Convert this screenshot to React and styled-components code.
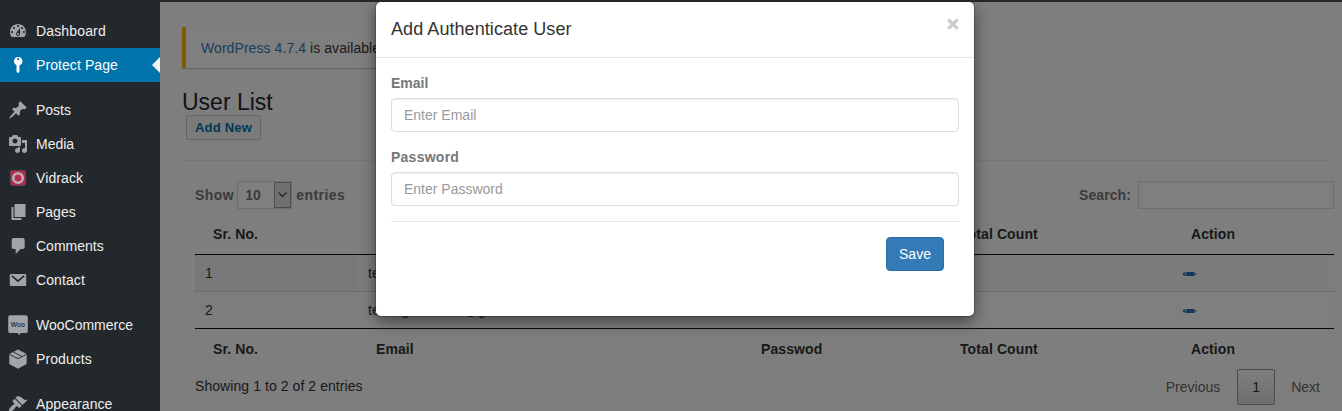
import React from "react";
import styled, { createGlobalStyle, css } from "styled-components";

const Global = createGlobalStyle`
  *, *::before, *::after { box-sizing: border-box; }
  html, body { margin: 0; height: 411px; overflow: hidden; background: #fff; }
  body { font: 14px/20px "Liberation Sans", Arial, sans-serif; color: #333; }
`;

const Page = styled.div`
  position: relative;
  height: 411px;
  overflow: hidden;
  display: flex;
  flex-direction: column;
`;
const AdminBar = styled.div`
  height: 2px;
  flex: none;
  background: #23282d;
  position: relative;
  z-index: 5;
`;
const Body = styled.div`
  display: flex;
  flex: 1;
  min-height: 0;
`;
const Sidebar = styled.nav`
  width: 160px;
  flex: none;
  background: #23282d;
  padding-top: 12px;
  position: relative;
  z-index: 4;
  overflow: hidden;
`;
const MenuItem = styled.div`
  position: relative;
  display: flex;
  align-items: center;
  height: 34px;
  margin-top: ${(p) => (p.$gap ? 11 : 0)}px;
  color: #eee;
  letter-spacing: ${(p) => p.$track || 0}px;
  ${(p) =>
    p.$active &&
    css`
      background: #0073aa;
      color: #fff;
      &::after {
        content: "";
        position: absolute;
        right: 0;
        top: 9px;
        border: 8px solid transparent;
        border-left: 0;
        border-right-color: #f1f1f1;
      }
    `}
`;
const MenuIcon = styled.svg`
  width: 20px;
  height: 20px;
  margin: 0 8px;
  flex: none;
  fill: ${(p) => (p.$active ? "#fff" : "#a0a5aa")};
`;

const Main = styled.main`
  flex: 1;
  min-width: 0;
  padding: 25px 8px 0 22px;
  background: #fdfdfd;
`;
const Notice = styled.div`
  width: 400px;
  height: 41px;
  padding: 11px 15px;
  border-left: 4px solid #ffb900;
  background: #fff;
  box-shadow: 0 1px 1px rgba(0, 0, 0, 0.2);
  white-space: nowrap;
  letter-spacing: 0.07px;
  a { color: #337ab7; }
`;
const Title = styled.h1`
  margin: 21px 0 0;
  font-size: 23px;
  line-height: 26px;
  font-weight: 400;
  color: #23282d;
`;
const AddNew = styled.button`
  display: block;
  width: 75px;
  height: 25px;
  margin-left: 4px;
  padding: 0;
  border: 1px solid #ccc;
  border-radius: 2px;
  background: #f7f7f7;
  color: #0073aa;
  font: bold 13px/22px "Liberation Sans", Arial, sans-serif;
  letter-spacing: 0.2px;
`;
const Rule = styled.hr`
  width: 1147px;
  margin: 20px 0;
  border: 0;
  border-top: 1px solid #eee;
`;
const DataTable = styled.section`
  margin-left: 13px;
`;
const Toolbar = styled.div`
  display: flex;
  justify-content: space-between;
  height: 28px;
  color: #777;
  font-weight: 700;
`;
const Control = styled.label`
  display: flex;
  align-items: center;
  line-height: 26px;
  letter-spacing: ${(p) => p.$track || 0.1}px;
`;
const Select = styled.span`
  display: flex;
  justify-content: space-between;
  width: 55px;
  height: 28px;
  margin: 0 4px 0 3px;
  border: 1px solid #ddd;
  padding-left: 7px;
  background: #fff;
  letter-spacing: 0.1px;
`;
const SelectArrow = styled.span`
  width: 17px;
  display: grid;
  place-items: center;
  border: 1px solid #999;
  background: #e1e1e1;
`;
const SearchBox = styled.input`
  width: 196px;
  height: 28px;
  margin-left: 7px;
  border: 1px solid #ddd;
  background: #fff;
  box-shadow: inset 0 1px 2px rgba(0, 0, 0, 0.07);
`;
const Grid = styled.div`
  display: grid;
  grid-template-columns: 163px 385px 199px 231px 161px;
  height: ${(p) => p.$h}px;
  border-bottom: ${(p) => p.$line || "0"};
  background: ${(p) => p.$bg || "transparent"};
`;
const Head = styled.div`
  padding: ${(p) => p.$top}px 18px 0;
  color: #333;
  font-weight: 700;
  letter-spacing: 0.1px;
`;
const Cell = styled.div`
  padding: 8px 10px;
  background: ${(p) => p.$bg || "transparent"};
  svg { display: block; margin-top: 9px; }
`;
const Footer = styled.div`
  display: flex;
  justify-content: space-between;
`;
const Info = styled.div`
  padding-top: 7px;
  letter-spacing: 0.07px;
`;
const Pager = styled.div`
  display: flex;
  color: #666;
`;
const PageBtn = styled.span`
  height: 36px;
  padding: 8px ${(p) => p.$px || 15}px;
  line-height: 20px;
  ${(p) =>
    p.$current &&
    css`
      width: 38px;
      margin: 0 2px;
      padding: 7px 0;
      text-align: center;
      border: 1px solid #979797;
      border-radius: 2px;
      background: linear-gradient(#fff, #dcdcdc);
      color: #333;
    `}
`;

const Backdrop = styled.div`
  position: absolute;
  inset: 2px 0 0 160px;
  z-index: 6;
  background: rgba(0, 0, 0, 0.5);
`;
const Modal = styled.div`
  position: absolute;
  left: 376px;
  top: 2px;
  z-index: 7;
  width: 598px;
  height: 314px;
  border-radius: 5px;
  background: #fff;
  box-shadow: 0 0 0 1px rgba(0, 0, 0, 0.16), 0 5px 15px rgba(0, 0, 0, 0.5);
  clip-path: inset(0 -30px -30px -30px);
`;
const ModalHeader = styled.header`
  display: flex;
  justify-content: space-between;
  height: 56px;
  padding: 14px 15px;
  border-bottom: 1px solid #e5e5e5;
`;
const ModalTitle = styled.h4`
  margin: 0;
  font-size: 18px;
  line-height: 26px;
  font-weight: 400;
  letter-spacing: 0.07px;
`;
const Close = styled.span`
  margin-top: -3px;
  font-size: 21px;
  line-height: 21px;
  font-weight: 700;
  color: #ccc;
  -webkit-text-stroke: 0.7px #ccc;
`;
const Form = styled.form`
  padding: 15px 15px 0;
`;
const Field = styled.label`
  display: block;
  margin-bottom: 15px;
  color: #777;
  font-weight: 700;
  letter-spacing: ${(p) => p.$track || 0}px;
`;
const TextInput = styled.input`
  display: block;
  width: 100%;
  height: 34px;
  margin-top: 5px;
  padding: 6px 12px;
  border: 1px solid #ddd;
  border-radius: 4px;
  box-shadow: inset 0 1px 2px rgba(0, 0, 0, 0.07);
  font: 14px "Liberation Sans", Arial, sans-serif;
  &::placeholder { color: #999; opacity: 1; }
`;
const Actions = styled.div`
  display: flex;
  justify-content: flex-end;
  padding: 15px;
  border-top: 1px solid #e5e5e5;
`;
const Save = styled.button`
  width: 58px;
  height: 34px;
  padding: 0;
  border: 1px solid #2e6da4;
  border-radius: 4px;
  background: #337ab7;
  color: #fff;
  font: 14px "Liberation Sans", Arial, sans-serif;
`;
const WooText = styled.text`
  font: bold 8px "Liberation Sans", sans-serif;
  fill: #3a4046;
`;

const icons = {
  dashboard: (
    <path fillRule="evenodd" d="M3.76 16h12.48c1.1-1.37 1.76-3.11 1.76-5 0-4.42-3.58-8-8-8s-8 3.58-8 8c0 1.89.66 3.63 1.76 5zM10 4c.55 0 1 .45 1 1s-.45 1-1 1-1-.45-1-1 .45-1 1-1zM6 6c.55 0 1 .45 1 1s-.45 1-1 1-1-.45-1-1 .45-1 1-1zm8 0c.55 0 1 .45 1 1s-.45 1-1 1-1-.45-1-1 .45-1 1-1zm-5.37 5.55L12 7v6c0 1.1-.9 2-2 2s-2-.9-2-2c0-.57.24-1.08.63-1.45zM4 10c.55 0 1 .45 1 1s-.45 1-1 1-1-.45-1-1 .45-1 1-1zm12 0c.55 0 1 .45 1 1s-.45 1-1 1-1-.45-1-1 .45-1 1-1zm-5 3c0-.55-.45-1-1-1s-1 .45-1 1 .45 1 1 1 1-.45 1-1z" />
  ),
  key: (
    <path fillRule="evenodd" d="M10.200 2a4.200 4.200 0 0 0-1.700 8.050V16.500l1.200 1.400h.6l1.200-1.400v-6.300A4.200 4.200 0 0 0 10.200 2zm0 1.100a1.100 1.100 0 1 1 0 2.200 1.100 1.100 0 0 1 0-2.200z" />
  ),
  posts: (
    <path d="M10.44 3.02l1.82-1.82 6.36 6.35-1.83 1.82c-1.05-.68-2.48-.57-3.41.36l-.75.75c-.92.93-1.04 2.35-.35 3.41l-1.83 1.82-2.41-2.41-2.8 2.79c-.42.42-3.38 2.71-3.8 2.29s1.86-3.39 2.28-3.81l2.79-2.79L4.1 9.36l1.83-1.82c1.05.69 2.48.57 3.4-.36l.75-.75c.93-.92 1.05-2.35.36-3.41z" />
  ),
  media: (
    <path fillRule="evenodd" d="M13 11V4c0-.55-.45-1-1-1h-1.67L9 1H5L3.67 3H2c-.55 0-1 .45-1 1v7c0 .55.45 1 1 1h10c.55 0 1-.45 1-1zM7 4.5c1.38 0 2.5 1.12 2.5 2.5S8.38 9.5 7 9.5 4.500 8.380 4.500 7 5.620 4.500 7 4.500zM14 6h5v10.500c0 1.380-1.120 2.500-2.500 2.500S14 17.880 14 16.500s1.120-2.500 2.500-2.500c.170 0 .340.020.500.050V9h-3V6zm-4 8.050V13h2v3.500c0 1.380-1.120 2.500-2.500 2.500S7 17.880 7 16.500 8.120 14 9.500 14c.170 0 .340.020.500.050z" />
  ),
  vidrack: (
    <>
      <rect x="2.800" y="2.800" width="14.400" height="14.400" rx="1" fill="#c01f45" stroke="#7c5a68" strokeWidth=".8" />
      <circle cx="10" cy="10" r="4.800" fill="#c42a4c" stroke="#b4b2b6" strokeWidth="2.600" />
      <circle cx="10" cy="10" r="1.700" fill="#a0305c" />
    </>
  ),
  pages: <path d="M6 15V2h11v13H6zm-1 1h8v2H3V5h2v11z" transform="translate(.5 0)" />,
  comments: <path d="M5 2h9c1.100 0 2 .9 2 2v7c0 1.100-.9 2-2 2h-2l-5 5v-5H5c-1.100 0-2-.9-2-2V4c0-1.100.9-2 2-2z" transform="translate(.7 0)" />,
  contact: (
    <path fillRule="evenodd" d="M3 4h14c.6 0 1.200.5 1.200 1.100v9.800c0 .6-.6 1.100-1.200 1.100H3c-.6 0-1.200-.5-1.200-1.100V5.100C1.800 4.500 2.400 4 3 4zm.7 1.700c-.4.500-.1 1 .3 1.300l6 5.300L16 7c.4-.3.800-.8.300-1.300-.4-.4-.9-.2-1.300.1l-5 4.200-5-4.200c-.4-.300-.9-.500-1.300-.1z" />
  ),
  woo: (
    <>
      <path d="M2.500.2h15c1.400 0 2.300.9 2.300 2.300v13.300c0 1.400-.9 2.300-2.300 2.300h-5L11.800 20l-2.600-1.900H2.500C1.100 18.100.2 17.200.2 15.800V2.500C.2 1.100 1.100.2 2.500.2z" />
      <WooText x="2.800" y="12.200" textLength="14.400" lengthAdjust="spacingAndGlyphs">Woo</WooText>
    </>
  ),
  products: (
    <>
      <path d="M10 .5l8.700 4.500v10L10 19.800 1.300 15V5z" />
      <path d="M1.300 5.300L10 9.700l8.700-4.400M5.400 3l8.500 4.500" fill="none" stroke="#23282d" strokeWidth=".9" />
    </>
  ),
  appearance: (
    <path d="M14.480 11.060L7.410 3.990l1.500-1.500c.5-.56 2.300-.47 3.510.32 1.210.8 1.430 1.280 2.910 2.100 1.180.64 2.450 1.260 4.450.85zm-.71.710L6.700 4.700 4.930 6.470c-.39.390-.39 1.020 0 1.410l1.060 1.060c.39.390.39 1.030 0 1.420-.6.600-1.430 1.110-2.210 1.690-.350.260-.7.530-1.010.840C1.430 14.230.4 16.080 1.400 17.070c.990 1 2.840-.030 4.180-1.360.310-.310.580-.660.850-1.020.570-.780 1.080-1.610 1.690-2.210.390-.390 1.020-.390 1.410 0l1.060 1.060c.390.390 1.020.390 1.410 0z" />
  ),
};

const menu = [
  { label: "Dashboard", icon: "dashboard", track: 0.15 },
  { label: "Protect Page", icon: "key", active: true, track: 0.08 },
  { label: "Posts", icon: "posts", gap: true },
  { label: "Media", icon: "media" },
  { label: "Vidrack", icon: "vidrack", track: 0.1 },
  { label: "Pages", icon: "pages" },
  { label: "Comments", icon: "comments" },
  { label: "Contact", icon: "contact", track: 0.1 },
  { label: "WooCommerce", icon: "woo", gap: true },
  { label: "Products", icon: "products", track: 0.08 },
  { label: "Appearance", icon: "appearance", gap: true, track: 0.1 },
];
const columns = ["Sr. No.", "Email", "Passwod", "Total Count", "Action"];
const rows = [
  { id: 1, email: "testing@gmail.com", bg: "#f9f9f9", sorted: "#f1f1f1" },
  { id: 2, email: "testinguserdata@gmail.com", bg: "#fff", sorted: "#fafafa" },
];

const EditIcon = () => (
  <svg width="14" height="4" viewBox="0 0 14 4">
    <path d="M1 0h11v1h2v2h-2v1H1L0 3V1z" fill="#337ab7" opacity=".55" />
    <path d="M0 1h2v2H0zM3.500 0H11v4H3.500z" fill="#2a70b0" />
  </svg>
);

export default function App() {
  return (
    <Page>
      <Global />
      <AdminBar />
      <Body>
        <Sidebar>
          {menu.map((m) => (
            <MenuItem key={m.label} $active={m.active} $gap={m.gap} $track={m.track}>
              <MenuIcon viewBox="0 0 20 20" $active={m.active}>{icons[m.icon]}</MenuIcon>
              {m.label}
            </MenuItem>
          ))}
        </Sidebar>
        <Main>
          <Notice><a>WordPress 4.7.4</a> is available!</Notice>
          <Title>User List</Title>
          <AddNew>Add New</AddNew>
          <Rule />
          <DataTable>
            <Toolbar>
              <Control $track={0.45}>
                Show
                <Select>
                  10
                  <SelectArrow>
                    <svg width="9" height="6" viewBox="0 0 9 6"><path d="M.5.5l4 4 4-4" fill="none" stroke="#444" strokeWidth="1.200" /></svg>
                  </SelectArrow>
                </Select>
                entries
              </Control>
              <Control>Search:<SearchBox /></Control>
            </Toolbar>
            <Grid $h={46} $line="1px solid #111">
              {columns.map((c) => <Head key={c} $top={15}>{c}</Head>)}
            </Grid>
            {rows.map((r, i) => (
              <Grid key={r.id} $h={37} $bg={r.bg} $line={i ? "1px solid #111" : "1px solid #ddd"}>
                <Cell $bg={r.sorted}>{r.id}</Cell>
                <Cell>{r.email}</Cell>
                <Cell />
                <Cell />
                <Cell><EditIcon /></Cell>
              </Grid>
            ))}
            <Grid $h={40}>
              {columns.map((c) => <Head key={c} $top={10}>{c}</Head>)}
            </Grid>
            <Footer>
              <Info>Showing 1 to 2 of 2 entries</Info>
              <Pager>
                <PageBtn>Previous</PageBtn>
                <PageBtn $current>1</PageBtn>
                <PageBtn $px={14}>Next</PageBtn>
              </Pager>
            </Footer>
          </DataTable>
        </Main>
      </Body>
      <Backdrop />
      <Modal>
        <ModalHeader>
          <ModalTitle>Add Authenticate User</ModalTitle>
          <Close>×</Close>
        </ModalHeader>
        <Form>
          <Field>Email<TextInput placeholder="Enter Email" /></Field>
          <Field $track={0.25}>Password<TextInput placeholder="Enter Password" /></Field>
          <Actions><Save type="button">Save</Save></Actions>
        </Form>
      </Modal>
    </Page>
  );
}
